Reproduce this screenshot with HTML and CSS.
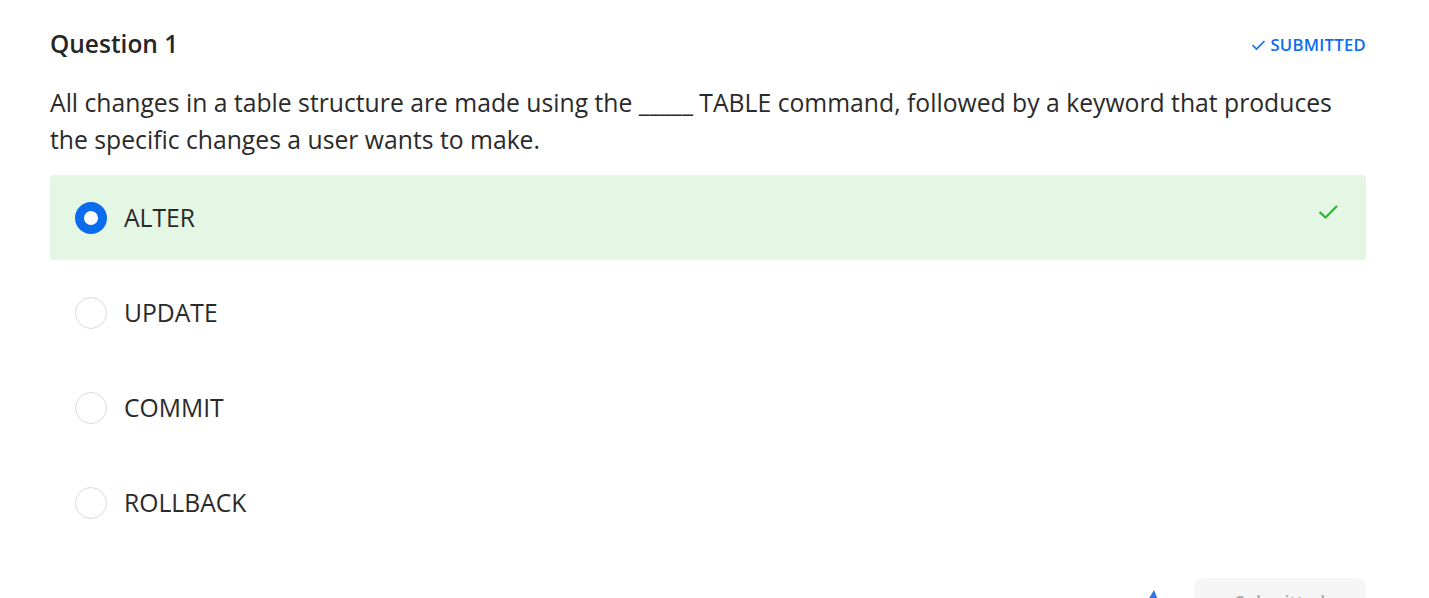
FILE: index.html
```html
<!DOCTYPE html>
<html>
<head>
<meta charset="utf-8">
<link rel="stylesheet" href="styles.css">
</head>
<body>
<div class="quiz">
  <div class="header">
    <h2 class="title">Question 1</h2>
    <div class="status">
      <svg width="15" height="15" viewBox="0 0 15 15"><path d="M1.5 8 L5.5 12 L13.5 4" fill="none" stroke="#0b6cf0" stroke-width="1.6"/></svg>
      <span>SUBMITTED</span>
    </div>
  </div>
  <p class="question">All changes in a table structure are made using the _____ TABLE command, followed by a keyword that produces the specific changes a user wants to make.</p>
  <div class="options">
    <div class="option correct">
      <span class="radio checked"></span>
      <span class="label">ALTER</span>
      <svg class="tick" width="24" height="24" viewBox="0 0 24 24"><path d="M2.5 12 L8.5 17.5 L20 6" fill="none" stroke="#1cbf1c" stroke-width="2.2"/></svg>
    </div>
    <div class="option"><span class="radio"></span><span class="label">UPDATE</span></div>
    <div class="option"><span class="radio"></span><span class="label">COMMIT</span></div>
    <div class="option"><span class="radio"></span><span class="label">ROLLBACK</span></div>
  </div>
  <div class="footer">
    <span class="spark"></span>
    <button class="submit">Submitted</button>
  </div>
</div>
</body>
</html>
```
FILE: styles.css
```css
* { box-sizing: border-box; }
body {
  margin: 0;
  background: #fff;
  font-family: "Open Sans", "Noto Sans", sans-serif;
  color: #212121;
  overflow: hidden;
}
.quiz {
  width: 1316px;
  margin-left: 50px;
  padding-top: 30px;
}
.header {
  display: flex;
  justify-content: space-between;
  align-items: center;
  height: 28px;
}
.title {
  margin: 0;
  font-size: 24.5px;
  font-weight: 600;
  line-height: 28px;
  color: #262626;
}
.status {
  display: flex;
  align-items: center;
  gap: 4px;
  color: #0b6cf0;
  font-size: 16.6px;
  font-weight: 600;
  letter-spacing: 0.3px;
}
.question {
  margin: 26px 0 17px;
  font-size: 24.73px;
  line-height: 37px;
  color: #2a2a2a;
}
.options {
  display: flex;
  flex-direction: column;
  gap: 10px;
}
.option {
  position: relative;
  display: flex;
  align-items: center;
  height: 85px;
  padding-left: 25px;
  border-radius: 4px;
}
.option.correct { background: #e4f7e4; }
.radio {
  width: 32px;
  height: 32px;
  border-radius: 50%;
  border: 1.5px solid #d4dce8;
  background: #fff;
  flex: none;
}
.radio.checked {
  border: 9px solid #0b6cf0;
}
.label {
  margin-left: 17px;
  font-size: 24.7px;
  color: #2a2a2a;
}
.tick {
  position: absolute;
  right: 25px;
  top: 25px;
}
.footer {
  display: flex;
  justify-content: flex-end;
  align-items: flex-start;
  margin-top: 33px;
  gap: 36px;
}
.spark {
  width: 0;
  height: 0;
  margin-top: 12px;
  border-left: 6px solid transparent;
  border-right: 4px solid transparent;
  border-bottom: 10px solid #2f74e8;
}
.submit {
  width: 172px;
  height: 48px;
  border: none;
  border-radius: 8px;
  background: #f5f5f5;
  color: #aaa;
  font-family: "Open Sans", sans-serif;
  font-size: 18px;
  font-weight: 600;
}
```
